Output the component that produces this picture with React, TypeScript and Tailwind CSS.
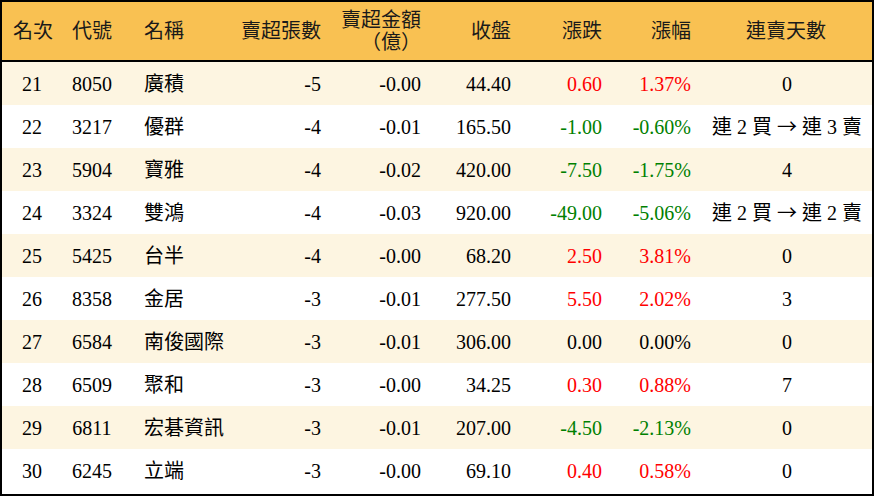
import React from "react";

interface Row {
  rank: number;
  code: string;
  name: string;
  lots: string;
  amount: string;
  close: string;
  change: string;
  pct: string;
  streak: string;
}

const rows: Row[] = [
  { rank: 21, code: "8050", name: "廣積", lots: "-5", amount: "-0.00", close: "44.40", change: "0.60", pct: "1.37%", streak: "0" },
  { rank: 22, code: "3217", name: "優群", lots: "-4", amount: "-0.01", close: "165.50", change: "-1.00", pct: "-0.60%", streak: "連 2 買 → 連 3 賣" },
  { rank: 23, code: "5904", name: "寶雅", lots: "-4", amount: "-0.02", close: "420.00", change: "-7.50", pct: "-1.75%", streak: "4" },
  { rank: 24, code: "3324", name: "雙鴻", lots: "-4", amount: "-0.03", close: "920.00", change: "-49.00", pct: "-5.06%", streak: "連 2 買 → 連 2 賣" },
  { rank: 25, code: "5425", name: "台半", lots: "-4", amount: "-0.00", close: "68.20", change: "2.50", pct: "3.81%", streak: "0" },
  { rank: 26, code: "8358", name: "金居", lots: "-3", amount: "-0.01", close: "277.50", change: "5.50", pct: "2.02%", streak: "3" },
  { rank: 27, code: "6584", name: "南俊國際", lots: "-3", amount: "-0.01", close: "306.00", change: "0.00", pct: "0.00%", streak: "0" },
  { rank: 28, code: "6509", name: "聚和", lots: "-3", amount: "-0.00", close: "34.25", change: "0.30", pct: "0.88%", streak: "7" },
  { rank: 29, code: "6811", name: "宏碁資訊", lots: "-3", amount: "-0.01", close: "207.00", change: "-4.50", pct: "-2.13%", streak: "0" },
  { rank: 30, code: "6245", name: "立端", lots: "-3", amount: "-0.00", close: "69.10", change: "0.40", pct: "0.58%", streak: "0" },
];

const cols = "grid grid-cols-[60px_60px_100px_109px_100px_90px_91px_90px_170px]";

function tone(v: string) {
  if (v.startsWith("-")) return "text-[#008000]";
  if (parseFloat(v) > 0) return "text-[#ff0000]";
  return "text-black";
}

// arrow drawn with the CJK font so it comes out full width, as in the screenshot
function Streak({ text }: { text: string }) {
  const parts = text.split("→");
  if (parts.length < 2) return <>{text}</>;
  return (
    <>
      {parts[0]}
      <span style={{ fontFamily: '"Noto Sans CJK TC", sans-serif' }}>→</span>
      {parts[1]}
    </>
  );
}

export default function App() {
  return (
    <div
      className="w-[874px] h-[496px] border-2 border-black bg-white text-[20px] text-black"
      style={{ fontFamily: '"Liberation Serif", "Noto Sans CJK TC", serif' }}
    >
      {/* Header */}
      <div className={`${cols} h-[60px] items-center bg-[#f9c152] border-b-2 border-black text-[#1a1a1a]`}>
        <div className="text-center pl-[2px]">名次</div>
        <div className="text-center">代號</div>
        <div className="pl-[22px]">名稱</div>
        <div className="text-right pr-[10px]">賣超張數</div>
        <div className="text-right pr-[10px] leading-[22px]">
          <div>賣超金額</div>
          <div>（億）</div>
        </div>
        <div className="text-right pr-[10px]">收盤</div>
        <div className="text-right pr-[10px]">漲跌</div>
        <div className="text-right pr-[11px]">漲幅</div>
        <div className="text-center pr-[2px]">連賣天數</div>
      </div>

      {/* Rows */}
      {rows.map((r, i) => (
        <div
          key={r.rank}
          className={`${cols} h-[43px] items-center ${i % 2 === 0 ? "bg-[#fdf5e1]" : "bg-white"}`}
        >
          <div className="text-center">{r.rank}</div>
          <div className="text-center">{r.code}</div>
          <div className="pl-[22px] whitespace-nowrap">{r.name}</div>
          <div className="text-right pr-[10px]">{r.lots}</div>
          <div className="text-right pr-[10px]">{r.amount}</div>
          <div className="text-right pr-[10px]">{r.close}</div>
          <div className={`text-right pr-[10px] ${tone(r.change)}`}>{r.change}</div>
          <div className={`text-right pr-[11px] ${tone(r.pct)}`}>{r.pct}</div>
          <div className="text-center whitespace-nowrap">
            <Streak text={r.streak} />
          </div>
        </div>
      ))}
    </div>
  );
}
